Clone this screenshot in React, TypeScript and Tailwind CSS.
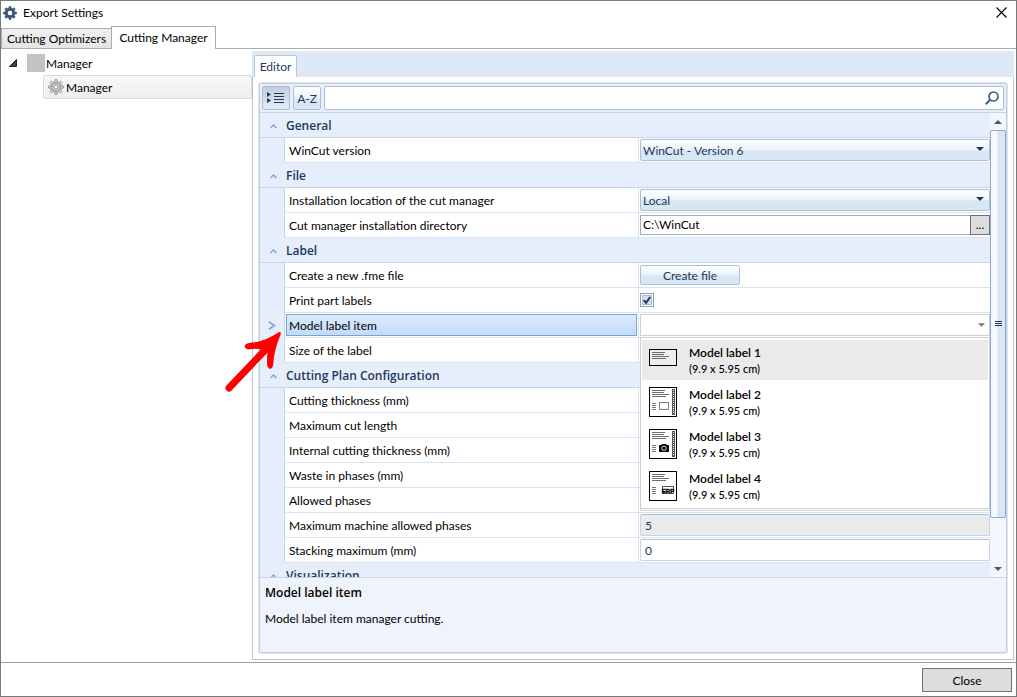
import React, { useState } from 'react';
import clsx from 'clsx';

type ControlKind = 'select' | 'path' | 'button' | 'checkbox' | 'models' | 'text' | 'readonly';

interface Property {
  id: string;
  name: string;
  kind: ControlKind;
  value?: string;
}

interface Category {
  title: string;
  items: Property[];
}

const categories: Category[] = [
  {
    title: 'General',
    items: [{ id: 'version', name: 'WinCut version', kind: 'select', value: 'WinCut - Version 6' }],
  },
  {
    title: 'File',
    items: [
      { id: 'location', name: 'Installation location of the cut manager', kind: 'select', value: 'Local' },
      { id: 'directory', name: 'Cut manager installation directory', kind: 'path', value: 'C:\\WinCut' },
    ],
  },
  {
    title: 'Label',
    items: [
      { id: 'fme', name: 'Create a new .fme file', kind: 'button', value: 'Create file' },
      { id: 'print', name: 'Print part labels', kind: 'checkbox' },
      { id: 'model', name: 'Model label item', kind: 'models' },
      { id: 'size', name: 'Size of the label', kind: 'text' },
    ],
  },
  {
    title: 'Cutting Plan Configuration',
    items: [
      { id: 'thickness', name: 'Cutting thickness (mm)', kind: 'text' },
      { id: 'maxcut', name: 'Maximum cut length', kind: 'text' },
      { id: 'internal', name: 'Internal cutting thickness (mm)', kind: 'text' },
      { id: 'waste', name: 'Waste in phases (mm)', kind: 'text' },
      { id: 'phases', name: 'Allowed phases', kind: 'text' },
      { id: 'maxphases', name: 'Maximum machine allowed phases', kind: 'readonly', value: '5' },
      { id: 'stacking', name: 'Stacking maximum (mm)', kind: 'text', value: '0' },
    ],
  },
  { title: 'Visualization', items: [] },
];

const models = ['Model label 1', 'Model label 2', 'Model label 3', 'Model label 4'];

const GearIcon: React.FC<{ color: string; size: number; outlined?: boolean }> = ({ color, size, outlined }) => (
  <svg width={size} height={size} viewBox="0 0 16 16" aria-hidden="true">
    {[0, 45, 90, 135, 180, 225, 270, 315].map((angle) => (
      <path
        key={angle}
        d="M6.6 3.4 L7 0.6 H9 L9.4 3.4 Z"
        transform={`rotate(${angle} 8 8)`}
        fill={outlined ? '#e4e4e4' : color}
        stroke={color}
        strokeWidth="0.9"
      />
    ))}
    <circle cx="8" cy="8" r="4.2" fill={outlined ? '#dcdcdc' : 'none'} stroke={color} strokeWidth={outlined ? 1 : 3.2} />
    {outlined && <circle cx="8" cy="8" r="2.1" fill="#f4f4f4" stroke={color} strokeWidth="1" />}
  </svg>
);

const Triangle: React.FC<{ up?: boolean; color?: string; className?: string }> = ({ up, color = '#1e395b', className }) => (
  <svg width="8" height="4" viewBox="0 0 8 4" className={className} aria-hidden="true">
    <path d={up ? 'M0 4 L4 0 L8 4 Z' : 'M0 0 H8 L4 4 Z'} fill={color} />
  </svg>
);

// Thumbnail of the printed label; every model adds its own block to the text lines
const LabelThumb: React.FC<{ index: number }> = ({ index }) => {
  const paper = index === 0 ? 17 : 30;
  const height = index === 0 ? 23 : 30;
  return (
    <svg width="28" height={height} viewBox={`0 0 28 ${height}`} shapeRendering="crispEdges" aria-hidden="true">
      <rect x="0.5" y="0.5" width="27" height={paper - 1} fill={index === 0 ? '#eeeeee' : '#ffffff'} stroke="#000000" />
      <path d="M3 3.5 H16 M3 5.5 H15 M3 7.5 H20 M3 9.5 H17" stroke="#6e6e6e" />
      {index > 0 && <path d="M3 16.5 H7 M3 18.5 H7 M3 20.5 H7 M3 22.5 H7" stroke="#777777" />}
      {(index === 1 || index === 2) && (
        <g>
          <rect x="23" y="2" width="3" height="26" fill="#555555" />
          <path d="M24.5 3 V27" stroke="#ffffff" strokeDasharray="1 1" />
        </g>
      )}
      {index === 1 && <rect x="10.5" y="15.5" width="9" height="7" fill="#ffffff" stroke="#808080" />}
      {index === 2 && (
        <g shapeRendering="auto">
          <path d="M10 16 H12 L13 15 H17 L18 16 H20 V23 H10 Z" fill="#111111" />
          <circle cx="15" cy="19.3" r="2.2" fill="#111111" stroke="#dddddd" strokeWidth="0.9" />
        </g>
      )}
      {index === 3 && (
        <g>
          <rect x="13.5" y="15.5" width="11" height="7" fill="#ffffff" stroke="#555555" />
          <text x="19" y="22" textAnchor="middle" fontSize="6" fontWeight="bold" fontFamily="Liberation Sans, sans-serif" fill="#000000" stroke="#000000" strokeWidth="0.4">
            ERP
          </text>
        </g>
      )}
    </svg>
  );
};

const glossy = 'bg-linear-to-b from-[#fbfdff] from-10% via-[#e9f1fa] via-50% to-[#d9e6f4] to-55%';

const ModelPicker: React.FC = () => {
  const [model, setModel] = useState('');
  const [open, setOpen] = useState(true);

  return (
    <div className="relative h-full w-full">
      <select
        id="model"
        value={model}
        onChange={(e) => setModel(e.target.value)}
        className="h-[22px] w-full appearance-none border border-[#cfcfcf] bg-white pl-1 text-[#1e395b] outline-none"
      >
        <option value="" />
        {models.map((name) => (
          <option key={name}>{name}</option>
        ))}
      </select>
      <Triangle color="#777777" className="pointer-events-none absolute top-[9px] right-[5px] w-[7px]" />
      {open && (
        <ul className="absolute inset-x-0 top-[23px] z-10 border border-[#cfcfcf] bg-white p-px">
          {models.map((name, index) => (
            <li key={name} className="h-[42px] py-px">
              <button
                type="button"
                onClick={() => {
                  setModel(name);
                  setOpen(false);
                }}
                className={clsx(
                  'flex h-10 w-full items-center pl-[7px] text-left leading-4 text-black',
                  index === 0 ? 'bg-[#eaeaea]' : 'hover:bg-[#eaeaea]',
                )}
              >
                <span className="flex w-10 items-center">
                  <LabelThumb index={index} />
                </span>
                <span className="flex flex-col pt-0.5">
                  <span className="text-[12px] font-semibold">{name}</span>
                  <span className="text-[11px] font-medium">(9.9 x 5.95 cm)</span>
                </span>
              </button>
            </li>
          ))}
        </ul>
      )}
    </div>
  );
};

const PropertyControl: React.FC<{ item: Property }> = ({ item }) => {
  switch (item.kind) {
    case 'select':
      return (
        <div className="relative w-full">
          <select
            id={item.id}
            className={clsx('block h-[22px] w-full appearance-none rounded-xs border border-[#a9c0dc] pt-0.5 pl-0.5 text-[#1e395b] outline-none', glossy)}
          >
            <option>{item.value}</option>
          </select>
          <Triangle className="pointer-events-none absolute top-2 right-[6px]" />
        </div>
      );
    case 'path':
      return (
        <div className="flex h-5 w-full">
          <input id={item.id} defaultValue={item.value} className="min-w-0 flex-1 border border-r-0 border-[#abadb3] bg-white pl-0.5 text-black outline-none" />
          <button type="button" aria-label="Browse" className="w-5 border border-[#707070] bg-[#dddddd] leading-4 text-black">
            ...
          </button>
        </div>
      );
    case 'button':
      return (
        <button id={item.id} type="button" className={clsx('h-5 w-[100px] rounded-xs border border-[#a9c0dc] pt-0.5 leading-4 text-[#1e395b]', glossy)}>
          {item.value}
        </button>
      );
    case 'checkbox':
      return (
        <span className="relative flex">
          <input id={item.id} type="checkbox" defaultChecked className="peer size-[14px] appearance-none border border-[#8ba0bc] bg-[#d5dfec] shadow-[inset_0_0_0_1px_#ffffff,inset_0_0_0_2px_#a9bad0]" />
          <svg viewBox="0 0 14 14" className="pointer-events-none absolute inset-0 hidden size-[14px] peer-checked:block" aria-hidden="true">
            <path d="M3.8 7.2 L6 9.8 L10.2 4" fill="none" stroke="#1e395b" strokeWidth="2" />
          </svg>
        </span>
      );
    case 'models':
      return <ModelPicker />;
    default:
      return (
        <input
          id={item.id}
          defaultValue={item.value}
          readOnly={item.kind === 'readonly'}
          className={clsx(
            'h-[22px] w-full rounded-xs border border-[#c5d6ea] border-t-[#a9c0dc] pl-1 text-[#1e395b] outline-none',
            item.kind === 'readonly' ? 'bg-[#ebebeb]' : 'bg-white',
          )}
        />
      );
  }
};

const PropertyRow: React.FC<{ item: Property }> = ({ item }) => {
  const selected = item.kind === 'models';
  return (
    <div className="flex h-[25px]">
      <div className="flex w-6 shrink-0 items-center justify-center bg-[#e6edfb]">
        {selected && (
          <svg width="8" height="9" viewBox="0 0 8 9" aria-hidden="true">
            <path d="M0.8 0.8 L6.5 4.5 L0.8 8.2" fill="none" stroke="#8ba5cb" strokeWidth="1.8" />
          </svg>
        )}
      </div>
      <div className="w-[354px] shrink-0 border-b border-l border-[#d6e4f5] border-l-[#c5d6ea]">
        <label
          htmlFor={item.id}
          className={clsx(
            'mx-px mt-px flex h-[22px] items-center border pt-0.5 pl-0.5 text-black',
            selected ? 'border-[#7da2ce] bg-linear-to-b from-[#dcebfc] to-[#c1dbfc]' : 'border-transparent',
          )}
        >
          {item.name}
        </label>
      </div>
      <div className="min-w-0 flex-1 border-b border-l border-[#d6e4f5] pt-px pl-px">
        <div className="flex h-[22px] items-center">
          <PropertyControl item={item} />
        </div>
      </div>
    </div>
  );
};

const PropertyGrid: React.FC = () => (
  <div className="flex min-h-0 flex-1">
    <div className="min-w-0 flex-1 overflow-hidden">
      {categories.map((category) => (
        <section key={category.title}>
          <h3 className="flex h-[25px] items-center border-b border-[#c5d6ea] bg-[#e6edfb] pt-0.5 pl-[10px] font-['Open_Sans',sans-serif] font-semibold text-[#1e395b]">
            <svg width="7" height="5" viewBox="0 0 7 5" className="mr-[9px]" aria-hidden="true">
              <path d="M0.5 4.2 L3.5 1 L6.5 4.2" fill="none" stroke="#7f9cc6" strokeWidth="1.2" />
            </svg>
            {category.title}
          </h3>
          {category.items.map((item) => (
            <PropertyRow key={item.id} item={item} />
          ))}
        </section>
      ))}
    </div>
    <div className="flex w-4 flex-col bg-[#f3f7fd]">
      <button type="button" aria-label="Scroll up" className="flex h-[17px] items-center justify-center">
        <Triangle up color="#41597d" />
      </button>
      <div className="flex min-h-0 flex-1 flex-col">
        <div className="flex h-[388px] items-center justify-center rounded-xs border border-[#8fa9cb] bg-linear-to-r from-[#f5f9fe] from-40% to-[#dae6f4] to-50%">
          <svg width="7" height="6" viewBox="0 0 7 6" shapeRendering="crispEdges" aria-hidden="true">
            <path d="M0 0.5 H7 M0 2.5 H7 M0 4.5 H7" stroke="#1e395b" />
          </svg>
        </div>
      </div>
      <button type="button" aria-label="Scroll down" className="flex h-[17px] items-center justify-center">
        <Triangle color="#41597d" />
      </button>
    </div>
  </div>
);

const Editor: React.FC = () => (
  <main className="flex min-w-0 flex-1 flex-col pt-0.5 pb-0.5">
    <div className="flex h-[26px] items-end bg-[#dfe9f5] pl-0.5">
      <button type="button" className="h-[22px] w-[43px] rounded-t-xs border border-b-0 border-[#b3c7df] bg-white text-[#1e395b]">
        Editor
      </button>
    </div>
    <div className="flex min-h-0 flex-1 flex-col border border-t-0 border-[#b3c7df] p-[6px]">
      <div className="flex min-h-0 flex-1 flex-col rounded-xs border border-[#c0cfe2] shadow-[0_0_0_1px_#e0e5ed]">
        <div className="flex h-[29px] items-center gap-[3px] border-b border-[#c5d6ea] bg-[#e7f0fa] px-0.5">
          <button type="button" aria-label="Categorized" className="flex h-6 w-7 items-center justify-center rounded-xs border border-[#a9bdd6] bg-linear-to-b from-[#c3cedd] to-[#e3ebf4]">
            <svg width="18" height="12" viewBox="0 0 18 12" shapeRendering="crispEdges" aria-hidden="true">
              <path d="M7 1.5 H17 M7 4.5 H17 M7 7.5 H17 M7 10.5 H17" stroke="#1e395b" />
              <path d="M0 0 L4 2.5 L0 5 Z M0 6 L4 8.5 L0 11 Z" fill="#1e395b" shapeRendering="auto" />
            </svg>
          </button>
          <button type="button" className={clsx('h-6 w-7 rounded-xs border border-[#a9c0dc] pt-0.5 text-[#1e395b]', glossy)}>
            A-Z
          </button>
          <div className="relative flex-1">
            <input aria-label="Search" className="block h-6 w-full rounded-xs border border-[#a9c0dc] bg-white pl-1 outline-none" />
            <svg width="14" height="14" viewBox="0 0 14 14" className="pointer-events-none absolute top-[5px] right-[5px]" aria-hidden="true">
              <circle cx="8.5" cy="5.5" r="4.5" fill="none" stroke="#41597d" strokeWidth="1.7" />
              <path d="M5.2 8.8 L0.8 13.2" stroke="#41597d" strokeWidth="2" />
            </svg>
          </div>
        </div>
        <PropertyGrid />
        <div className="h-[75px] shrink-0 border-t border-[#c5d6ea] bg-[#eff3fc] px-[5px] pt-[7px] leading-4 text-black">
          <p className="font-['Open_Sans',sans-serif] font-semibold">Model label item</p>
          <p className="mt-[10px]">Model label item manager cutting.</p>
        </div>
      </div>
    </div>
  </main>
);

const Sidebar: React.FC = () => (
  <nav className="w-[251px] shrink-0 pt-0.5 text-black">
    <div className="flex h-6 items-center pl-2">
      <svg width="8" height="8" viewBox="0 0 8 8" aria-hidden="true">
        <path d="M7.5 0.5 V7.5 H0.5 Z" fill="#404040" stroke="#262626" />
      </svg>
      <span className="ml-[10px] size-[18px] bg-[#c3c3c3]" />
      <span className="ml-px pt-0.5">Manager</span>
    </div>
    <div className="ml-[42px] flex h-6 items-center gap-0.5 rounded-xs border border-[#d9d9d9] bg-linear-to-b from-[#f8f8f8] to-[#eeeeee] pl-1">
      <GearIcon color="#8a8a8a" size={16} outlined />
      <span className="pt-0.5">Manager</span>
    </div>
  </nav>
);

export default function App() {
  return (
    <div className="relative flex h-screen flex-col overflow-hidden border border-[#7a7a7a] bg-white font-['Lato','Open_Sans',sans-serif] text-[12px]">
      <header className="flex h-[25px] shrink-0 items-center justify-between pr-[9px] pb-0.5 pl-[2px] text-black">
        <div className="flex items-center gap-[6px]">
          <GearIcon color="#3f5878" size={14} />
          <h1>Export Settings</h1>
        </div>
        <button type="button" aria-label="Close window">
          <svg width="11" height="11" viewBox="0 0 11 11" aria-hidden="true">
            <path d="M0.5 0.5 L10.5 10.5 M10.5 0.5 L0.5 10.5" stroke="#000000" strokeWidth="1.1" />
          </svg>
        </button>
      </header>
      <div className="flex h-[23px] shrink-0 items-end border-b border-[#acacac] text-black">
        <button type="button" className="h-5 w-[110px] border-t border-l border-[#acacac] bg-linear-to-b from-[#f0f0f0] to-[#e5e5e5]">
          Cutting Optimizers
        </button>
        <button type="button" className="-mb-px h-[23px] w-[105px] border border-b-0 border-[#acacac] bg-white">
          Cutting Manager
        </button>
      </div>
      <div className="flex min-h-0 flex-1 pr-0.5">
        <Sidebar />
        <Editor />
      </div>
      <footer className="flex h-[34px] shrink-0 items-center justify-end border-t border-[#a0a0a0] pr-1">
        <button type="button" className="h-6 w-[90px] border border-[#707070] bg-[#dddddd] pt-0.5 text-black">
          Close
        </button>
      </footer>
      {/* Pointer to the selected property */}
      <svg width="60" height="64" viewBox="0 0 60 64" className="pointer-events-none absolute top-[329px] left-[222px] z-20" aria-hidden="true">
        <path d="M6 58 L44 18" stroke="#fe0000" strokeWidth="7" strokeLinecap="round" />
        <path
          d="M57.5 2.5 Q58.5 3.5 57 6 Q51 20 50 36 Q47.5 41.5 44.5 36.5 Q43.5 31 44.5 22.5 L36 19 Q30 18.5 25 19.5 Q20 17.5 22.5 14.5 Q25 12.5 32 12.3 Q43 10.5 54.5 3 Q56.5 1.5 57.5 2.5 Z"
          fill="#fe0000"
        />
      </svg>
    </div>
  );
}
